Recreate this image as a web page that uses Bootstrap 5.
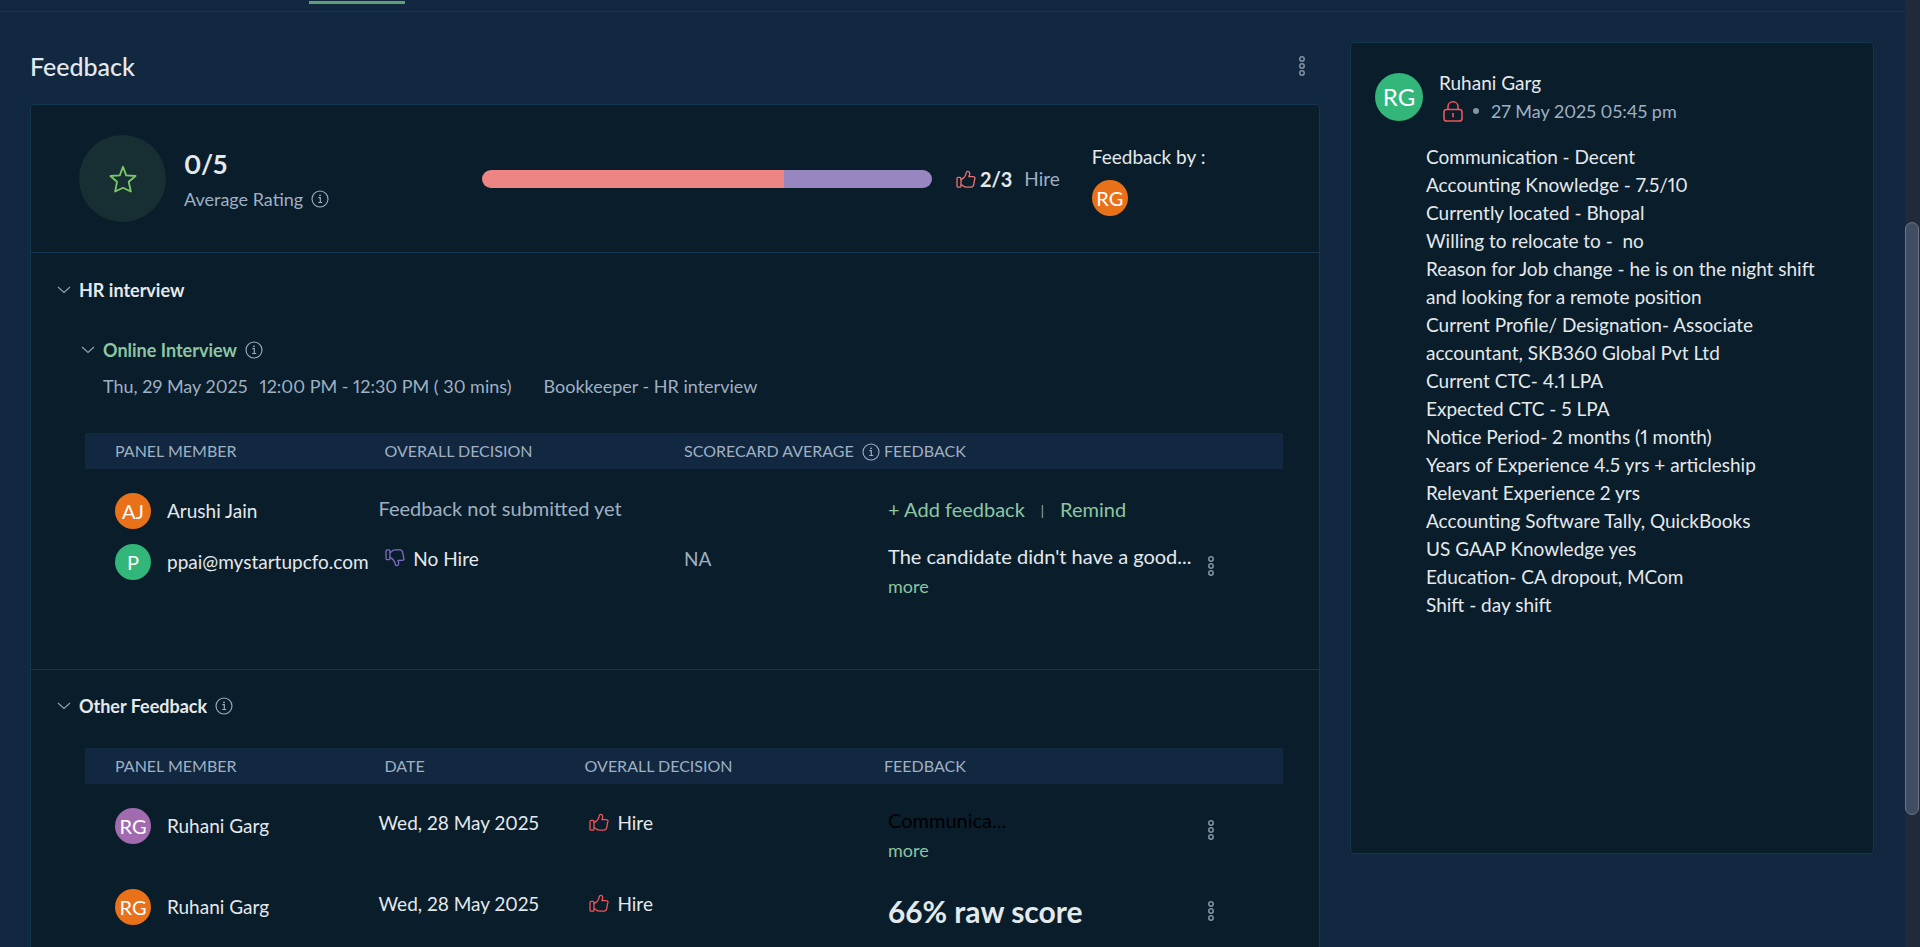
<!DOCTYPE html>
<html lang="en">
<head>
<meta charset="utf-8">
<meta name="viewport" content="width=device-width, initial-scale=1">
<title>Candidate feedback</title>
<link href="https://cdn.jsdelivr.net/npm/bootstrap@5.3.0/dist/css/bootstrap.min.css" rel="stylesheet">
<style>
:root{--page:#122740;--panel:#0a1d2b;--line:#14364f;--ink:#e4e9ec;--soft:#9fb0c3;--mint:#8cc6a3;--dim:#8593a5}
body{background:var(--page);color:var(--ink);font-family:Lato,"Liberation Sans",sans-serif;font-size:19px;line-height:30px;font-variant-numeric:proportional-nums}
a{color:var(--mint);text-decoration:none}
.shell{height:100vh}
.view{min-width:0}
.tab-strip{height:12px;border-bottom:1px solid var(--line);padding-left:309px}
.tab-on{width:96px;height:3px;margin-top:1px;background:#5f9f78}
.split{display:grid;grid-template-columns:1290fr 524fr;column-gap:30px;padding:30px 31px 0 30px}
.panel{background:var(--panel);border:1px solid var(--line);border-radius:4px}
.page-title{font-size:25px;line-height:30px;font-weight:500}
.title-bar{padding:9px 6px 23px 0}
.dots{border:0;background:none;padding:0;width:24px;height:24px;line-height:0;color:var(--dim)}
.summary{padding:30px 48px;border-bottom:1px solid var(--line)}
.star-disc{width:87px;height:87px;background:#172e33;color:#7cc96b}
.rating{width:316px;padding-left:18px}
.score{font-size:26px;line-height:32px;font-weight:700}
.t18{font-size:18px}
.t20{font-size:20px}
.soft{color:var(--soft)}
.meter{width:450px;height:18px;border-radius:9px;background:none}
.meter .hire{background:#ee8585}
.meter .nohire{background:#9886c1}
.tally{font-size:20px;font-weight:700}
.red{color:#f0545a}
.pink{color:#ee7272}
.violet{color:#7c6cc0}
.avatar{flex:none;width:36px;height:36px;border-radius:50%;color:#fff;font-size:20px}
.avatar-lg{width:48px;height:48px;font-size:24px}
.orange{background:#e8711a}.green{background:#33b679}.purple{background:#a26bb0}
.fold{border:0;background:none;color:var(--ink);padding:0;font-size:18px;font-weight:700;line-height:30px}
.fold svg{color:#8fa0b0;margin-right:8px}
.fold.mint{color:var(--mint)}
.round-section{padding:22px 36px 68px 26px;border-bottom:1px solid var(--line)}
.other-section{padding:21px 36px 0 26px}
.session{padding:30px 0 0 24px}
.session-info{margin-top:6px;padding-left:22px}
.round-table{padding:32px 0 0 28px}
.other-table{padding:27px 0 0 28px}
.grid-table{width:100%;table-layout:fixed;border-collapse:collapse}
.grid-table th{background:var(--page);height:36px;padding:0 0 0 6px;font-size:16px;font-weight:400;color:var(--soft);white-space:nowrap;text-transform:uppercase;line-height:20px}
.grid-table td{vertical-align:top;padding:7px 0 0;white-space:nowrap}
.grid-table td svg{vertical-align:-1px}
.grid-table th:first-child,.grid-table td:first-child{padding-left:30px}
.grid-table tbody::before{content:"";display:block;height:17px}
.grid-table td.note{padding:5px 0 0 10px;font-size:20px;line-height:29px}
.grid-table td.act{padding-top:16px;padding-left:19px}
.in6{padding-left:6px!important}
.in10{padding-left:10px!important}
.tall{height:81px}.short{height:51px}
.fade-text{color:#000}
.bar-sep{font-size:13px;vertical-align:1px;margin:0 16px}
.raw{font-size:30px;line-height:32px;font-weight:700;margin:8px 0 0}
.note-card{min-height:812px;padding:30px 24px;align-self:start}
.note-body{line-height:28px;margin:17px 0 0 51px}
.bullet{width:6px;height:6px;background:var(--dim);margin:0 12px 0 10px}
.rail{flex:none;width:15px;background:#202a38;padding-top:222px}
.thumb{width:14px;height:593px;border-radius:7px;background:#404d63;border:1px solid #6a7688}
</style>
</head>
<body>
<svg class="d-none" aria-hidden="true">
  <symbol id="i-info" viewBox="0 0 18 18"><circle cx="9" cy="9" r="8" fill="none" stroke="currentColor" stroke-width="1.1"/><path d="M7.4 7.6H9.3V12.3M7.2 12.5H11.2" fill="none" stroke="currentColor" stroke-width="1.1"/><circle cx="9" cy="5.3" r=".9" fill="currentColor"/></symbol>
  <symbol id="i-dots" viewBox="0 0 8 20"><g fill="none" stroke="currentColor" stroke-width="1.5"><circle cx="4" cy="3" r="2.2"/><circle cx="4" cy="10" r="2.2"/><circle cx="4" cy="17" r="2.2"/></g></symbol>
  <symbol id="i-up" viewBox="0 0 20 18"><g fill="none" stroke="currentColor" stroke-width="1.3" stroke-linejoin="round" stroke-linecap="round"><rect x="1" y="7.3" width="4" height="9.8" rx="1.2"/><path d="M5 9.6C7.5 8.4 9.7 6.2 10.3 2.6 10.5.9 13.6.6 13.7 3.4 13.7 4.6 13.4 5.6 12.9 6.6H17.2C19.2 6.7 19.4 8.6 18.6 9.4L17.7 14.6C17.3 16.4 16.6 17.1 15 17.1H10.6C8.6 17.1 7.4 16.7 6.6 15.4 6.2 14.9 5.7 14.8 5 14.8"/></g></symbol>
  <symbol id="i-down" viewBox="0 0 20 18"><use href="#i-up" transform="matrix(1 0 0 -1 0 18)" width="20" height="18"/></symbol>
  <symbol id="i-chev" viewBox="0 0 14 8"><path d="M1 1L7 6.5L13 1" fill="none" stroke="currentColor" stroke-width="1.2"/></symbol>
  <symbol id="i-star" viewBox="0 0 28 28"><path d="M14 1.8L17.2 10.4L26.6 11L19.7 16.8L21.8 26.5L14 22.8L6.2 26.5L8 16.8L1.4 11L10.8 10.4Z" fill="none" stroke="currentColor" stroke-width="1.8" stroke-linejoin="round"/></symbol>
  <symbol id="i-lock" viewBox="0 0 20 21"><g fill="none" stroke="currentColor" stroke-width="1.6"><rect x="1" y="8.5" width="18" height="11.5" rx="2.6"/><path d="M5 8.5V5.6A5 4.8 0 0 1 15 5.6V8.5M10 12V16.2"/></g></symbol>
</svg>

<div class="shell d-flex overflow-hidden">
  <div class="view flex-grow-1 overflow-hidden">
    <div class="tab-strip"><div class="tab-on d-inline-block align-top"></div></div>
    <div class="split">
      <main>
        <div class="title-bar d-flex justify-content-between align-items-center">
          <h1 class="page-title m-0">Feedback</h1>
          <button class="dots" aria-label="Feedback options"><svg width="8" height="20"><use href="#i-dots"/></svg></button>
        </div>

        <div class="panel">
          <section class="summary d-flex align-items-center">
            <div class="star-disc rounded-circle d-flex align-items-center justify-content-center"><svg width="28" height="28"><use href="#i-star"/></svg></div>
            <div class="rating">
              <div class="score pt-1">0/5</div>
              <div class="t18 soft mt-1 d-flex align-items-center gap-2">Average Rating <svg width="18" height="18"><use href="#i-info"/></svg></div>
            </div>
            <div class="meter progress" role="img" aria-label="2 of 3 hire">
              <div class="progress-bar hire" style="width:67%"></div>
              <div class="progress-bar nohire" style="width:33%"></div>
            </div>
            <div class="d-flex align-items-center ms-4">
              <svg class="pink me-1" width="20" height="18"><use href="#i-up"/></svg>
              <span class="tally">2/3</span><span class="soft ms-2 ps-1">Hire</span>
            </div>
            <div class="ms-4 ps-2">
              <div>Feedback by :</div>
              <div class="avatar orange d-flex align-items-center justify-content-center mt-2">RG</div>
            </div>
          </section>

          <section class="round-section">
            <button class="fold d-flex align-items-center"><svg width="14" height="8"><use href="#i-chev"/></svg>HR interview</button>
            <div class="session">
              <div class="d-flex align-items-center gap-2">
                <button class="fold mint d-flex align-items-center"><svg width="14" height="8"><use href="#i-chev"/></svg>Online Interview</button>
                <svg class="soft" width="18" height="18"><use href="#i-info"/></svg>
              </div>
              <div class="session-info t18 soft d-flex"><span class="me-2 pe-1">Thu, 29 May 2025</span><span class="me-4 pe-2">12:00 PM - 12:30 PM ( 30 mins)</span><span>Bookkeeper - HR interview</span></div>
            </div>
            <div class="round-table">
              <table class="grid-table">
                <colgroup><col style="width:24.5%"><col style="width:25%"><col style="width:16.7%"><col style="width:25.2%"><col></colgroup>
                <thead><tr><th>Panel member</th><th>Overall decision</th><th>Scorecard average&nbsp; <svg width="18" height="18"><use href="#i-info"/></svg></th><th>Feedback</th><th></th></tr></thead>
                <tbody>
                  <tr class="short">
                    <td><div class="d-flex align-items-center"><span class="avatar orange d-flex align-items-center justify-content-center me-3">AJ</span>Arushi Jain</div></td>
                    <td class="soft t20">Feedback not submitted yet</td>
                    <td></td>
                    <td class="note"><div class="mt-1"><a href="#">+ Add feedback</a><span class="soft bar-sep">|</span><a href="#">Remind</a></div></td>
                    <td></td>
                  </tr>
                  <tr class="short">
                    <td><div class="d-flex align-items-center"><span class="avatar green d-flex align-items-center justify-content-center me-3">P</span>ppai@mystartupcfo.com</div></td>
                    <td class="in6"><svg class="violet me-1" width="20" height="18"><use href="#i-down"/></svg> No Hire</td>
                    <td class="in6 soft">NA</td>
                    <td class="note">The candidate didn't have a good...<br><a class="t18" href="#">more</a></td>
                    <td class="act"><button class="dots" aria-label="Options"><svg width="8" height="20"><use href="#i-dots"/></svg></button></td>
                  </tr>
                </tbody>
              </table>
            </div>
          </section>

          <section class="other-section">
            <div class="d-flex align-items-center gap-2">
              <button class="fold d-flex align-items-center"><svg width="14" height="8"><use href="#i-chev"/></svg>Other Feedback</button>
              <svg class="soft" width="18" height="18"><use href="#i-info"/></svg>
            </div>
            <div class="other-table">
              <table class="grid-table">
                <colgroup><col style="width:24.5%"><col style="width:16.7%"><col style="width:25%"><col style="width:25.2%"><col></colgroup>
                <thead><tr><th>Panel member</th><th>Date</th><th>Overall decision</th><th>Feedback</th><th></th></tr></thead>
                <tbody>
                  <tr class="tall">
                    <td><div class="d-flex align-items-center"><span class="avatar purple d-flex align-items-center justify-content-center me-3">RG</span>Ruhani Garg</div></td>
                    <td>Wed, 28 May 2025</td>
                    <td class="in10"><svg class="red me-1" width="20" height="18"><use href="#i-up"/></svg> Hire</td>
                    <td class="note"><span class="fade-text">Communica...</span><br><a class="t18" href="#">more</a></td>
                    <td class="act"><button class="dots" aria-label="Options"><svg width="8" height="20"><use href="#i-dots"/></svg></button></td>
                  </tr>
                  <tr class="tall">
                    <td><div class="d-flex align-items-center"><span class="avatar orange d-flex align-items-center justify-content-center me-3">RG</span>Ruhani Garg</div></td>
                    <td>Wed, 28 May 2025</td>
                    <td class="in10"><svg class="red me-1" width="20" height="18"><use href="#i-up"/></svg> Hire</td>
                    <td class="note"><h2 class="raw">66% raw score</h2></td>
                    <td class="act"><button class="dots" aria-label="Options"><svg width="8" height="20"><use href="#i-dots"/></svg></button></td>
                  </tr>
                </tbody>
              </table>
            </div>
          </section>
        </div>
      </main>

      <aside class="panel note-card">
        <div class="d-flex">
          <div class="avatar avatar-lg green d-flex align-items-center justify-content-center">RG</div>
          <div class="ps-3">
            <div class="lh-1 pb-1">Ruhani Garg</div>
            <div class="d-flex align-items-center t18 soft ps-1">
              <svg class="red" width="20" height="21"><use href="#i-lock"/></svg>
              <span class="bullet rounded-circle"></span><span>27 May 2025 05:45 pm</span>
            </div>
          </div>
        </div>
        <div class="note-body">Communication - Decent<br>Accounting Knowledge - 7.5/10<br>Currently located - Bhopal<br>Willing to relocate to -&nbsp; no<br>Reason for Job change - he is on the night shift<br>and looking for a remote position<br>Current Profile/ Designation- Associate<br>accountant, SKB360 Global Pvt Ltd<br>Current CTC- 4.1 LPA<br>Expected CTC - 5 LPA<br>Notice Period- 2 months (1 month)<br>Years of Experience 4.5 yrs + articleship<br>Relevant Experience 2 yrs<br>Accounting Software Tally, QuickBooks<br>US GAAP Knowledge yes<br>Education- CA dropout, MCom<br>Shift - day shift</div>
      </aside>
    </div>
  </div>
  <div class="rail" aria-hidden="true"><div class="thumb"></div></div>
</div>
<script src="https://cdn.jsdelivr.net/npm/bootstrap@5.3.0/dist/js/bootstrap.bundle.min.js"></script>
</body>
</html>
